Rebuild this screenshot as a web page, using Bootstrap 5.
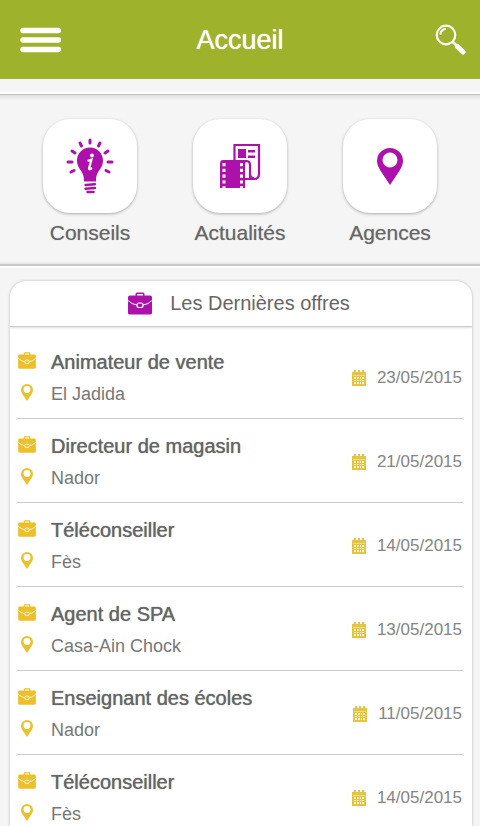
<!DOCTYPE html>
<html lang="fr">
<head>
<meta charset="utf-8">
<meta name="viewport" content="width=device-width, initial-scale=1">
<title>Accueil</title>
<link href="https://cdn.jsdelivr.net/npm/bootstrap@5.3.0/dist/css/bootstrap.min.css" rel="stylesheet">
<style>
  :root { --green: #9fb22c; --purple: #ad10ab; --yellow: #ecc02a; }
  body { font-family: "Liberation Sans", Arial, sans-serif; color: #666; background: #f5f5f5; }
  svg { display: block; flex: none; }
  .topbar { background: var(--green); min-height: 79px; padding: 0 14px 0 20px; }
  .topbar h1 { font-size: 27px; line-height: 32px; text-shadow: 0 0 1px #fff; }
  .side-start { width: 48px; }
  .side-end { width: 54px; }
  .shortcuts { margin-top: 15px; padding: 24px 15px 15px; border-top: 1px solid #bcbec2; border-bottom: 2px solid #c9c9c9;
    background: linear-gradient(#dfe0e3, #f5f5f5 5px, #f5f5f5 calc(100% - 3px), #e4e4e4);
    box-shadow: 0 -2px 0 #fff, 0 2px 0 #fff; }
  .shortcuts a { color: #666; font-size: 21px; line-height: 32px; text-shadow: 0 0 1px #aaa; }
  .tile { width: 94px; height: 94px; border-radius: 27px; background: #fff; box-shadow: 0 1px 3px #aaa; margin-bottom: 4px; color: var(--purple); }
  .offers { margin: 15px 8px 0 10px; border-radius: 16px 16px 0 0; box-shadow: 0 0 3px #b5b5b5; }
  .offers-head { border-bottom: 1px solid #ccc; box-shadow: 0 1px 2px #ddd; padding: 7px 0; color: #666; }
  .offers-head h2 { font-size: 20px; line-height: 31px; }
  .offers-head svg { color: var(--purple); margin-right: 18px; }
  .offer-list { padding: 8px 9px 0 7px; scrollbar-width: none; }
  .offer { padding: 11px 1px 8px; border-bottom: 1px solid #ccc; }
  .offer svg { color: var(--yellow); }
  .line { height: 32px; gap: 15px; }
  .line svg { margin-bottom: 4px; }
  .line h3 { font-size: 20px; line-height: 32px; text-shadow: 0 0 1px #666; }
  .place { font-size: 18px; line-height: 32px; color: #777; }
  .when { font-size: 17px; color: #858585; gap: 11px; }
  .offer .when svg { color: #e5c440; }
</style>
<script src="https://cdn.jsdelivr.net/npm/bootstrap@5.3.0/dist/js/bootstrap.bundle.min.js"></script>
</head>
<body class="vh-100 d-flex flex-column overflow-hidden">
<svg width="0" height="0" class="position-absolute" aria-hidden="true">
  <symbol id="case" viewBox="0 0 24 23">
    <path fill="currentColor" fill-rule="evenodd" d="M7.500 3.500V2Q7.500.5 9 .5h6q1.500 0 1.500 1.500v1.500h5.500q2 0 2 2V21q0 1.500-2 1.500H2Q0 22.500 0 21V5.500q0-2 2-2zM9 3.500h6V2H9z"/>
    <path d="M0 8.500q4 4 9 4.500M24 8.500q-4 4-9 4.500" fill="none" stroke="#fff" stroke-width="1"/>
    <rect x="9" y="11" width="6" height="4.500" rx="2" fill="none" stroke="#fff" stroke-width="1.200"/>
  </symbol>
  <symbol id="pin" viewBox="0 0 26 37">
    <path fill="currentColor" fill-rule="evenodd" d="M13 0a13 13 0 0 1 13 13c0 4-2 7-4 10.500L13 37 4 23.500C2 20 0 17 0 13A13 13 0 0 1 13 0zm0 4.500a7.500 7.500 0 1 0 0 15 7.500 7.500 0 0 0 0-15z"/>
  </symbol>
  <symbol id="calendar" viewBox="0 0 14 16">
    <path fill="currentColor" d="M0 2h14v14H0zM2 0h2v3H2zM10 0h2v3h-2zM6 0h2v3H6z"/>
    <path stroke="#fff" stroke-width="1" d="M1 5.500h12" opacity=".4"/>
    <path fill="#fff" opacity=".75" d="M2 7h2v2H2zM5 7h2v2H5zM8 7h1v2H8zM10 7h2v2h-2zM2 10h2v1H2zM5 10h2v1H5zM8 10h1v1H8zM10 10h2v1h-2zM2 12h2v2H2zM5 12h2v2H5zM8 12h1v2H8zM10 12h2v2h-2z"/>
  </symbol>
</svg>

<header class="topbar d-flex align-items-center justify-content-between flex-shrink-0 text-white">
  <button type="button" class="side-start btn p-0 border-0 text-white" aria-label="Menu">
    <svg width="41" height="26" viewBox="0 0 41 26"><path d="M3 3.500h35.500M3 13h35.500M3 22.500h35.500" stroke="#fff" stroke-width="5.400" stroke-linecap="round"/></svg>
  </button>
  <h1 class="m-0 fw-normal">Accueil</h1>
  <button type="button" class="side-end btn p-0 border-0 d-flex justify-content-end" aria-label="Rechercher">
    <svg width="31" height="31" viewBox="0 0 31 31" fill="none" stroke="#fff" stroke-linecap="round"><circle cx="11" cy="11" r="9.300" stroke-width="2.200"/><path d="M5.500 10q.5-4 4.500-5" stroke-width="2.200"/><path d="M18 18l4 4" stroke-width="2.800"/><path d="M22.500 22.500l5.500 5.500" stroke-width="5"/></svg>
  </button>
</header>

<nav class="shortcuts flex-shrink-0" aria-label="Raccourcis">
  <div class="row g-0 text-center">
    <div class="col"><a href="#conseils" class="d-inline-flex flex-column align-items-center text-decoration-none">
      <span class="tile d-flex align-items-center justify-content-center">
        <svg width="48" height="56" viewBox="0 0 48 56"><g fill="none" stroke="currentColor" stroke-width="3" stroke-linecap="round"><path d="M24 2v3M14 5l1.500 3M34 5l-1.500 3M6 13l3 2M42 13l-3 2M2 24h4M42 24h4M5 34l3-1.500M43 34l-3-1.500"/></g><path fill="currentColor" d="M24 9.500c7.500 0 13 6 13 13 0 5-2.500 8-4.500 11-1.800 3-2.500 5-2.500 10H18c0-5-.7-7-2.500-10-2-3-4.500-6-4.500-11 0-7 5.500-13 13-13z"/><path d="M19.500 47l9.500-.8M19.500 50.800l9.500-.8M21.500 54h6" stroke="currentColor" stroke-width="2.400" stroke-linecap="round"/><path d="M21.500 23l4-1.500-2.500 9q0 1.500 3-.5" fill="none" stroke="#fff" stroke-width="2.200"/><circle cx="26" cy="17.500" r="1.900" fill="#fff"/></svg>
      </span>Conseils</a></div>
    <div class="col"><a href="#actualites" class="d-inline-flex flex-column align-items-center text-decoration-none">
      <span class="tile d-flex align-items-center justify-content-center">
        <svg width="42" height="46" viewBox="0 0 42 46"><path d="M15.500 17V2h24.500v29q0 5-5 5h-9M31 36V22q0-4-4-4" fill="none" stroke="currentColor" stroke-width="2.200"/><path d="M31 29q0 6 4 6" fill="none" stroke="currentColor" stroke-width="1.600"/><path fill="currentColor" d="M19 6h8v9h-8zM29 7h7v2.500h-7zM29 12.500h7V15h-7zM4 17h24q-2 2-2 5v23H1V21q0-4 3-4z"/><path d="M5 20v25M22.500 20v25" stroke="#fff" stroke-width="3" stroke-dasharray="3.200 2.600"/></svg>
      </span>Actualités</a></div>
    <div class="col"><a href="#agences" class="d-inline-flex flex-column align-items-center text-decoration-none">
      <span class="tile d-flex align-items-center justify-content-center"><svg width="26" height="37"><use href="#pin"/></svg></span>Agences</a></div>
  </div>
</nav>

<main class="offers bg-white d-flex flex-column flex-grow-1 overflow-hidden">
  <div class="offers-head d-flex align-items-center justify-content-center flex-shrink-0">
    <svg width="24" height="23"><use href="#case"/></svg>
    <h2 class="m-0 me-1 fw-normal">Les Dernières offres</h2>
  </div>
  <ul class="offer-list list-unstyled m-0 flex-grow-1 overflow-auto">
    <li class="offer d-flex align-items-center justify-content-between">
      <div><div class="line d-flex align-items-center"><svg width="18" height="17"><use href="#case"/></svg><h3 class="m-0 fw-normal">Animateur de vente</h3></div>
      <div class="line d-flex align-items-center"><svg width="18" height="17"><use href="#pin"/></svg><span class="place">El Jadida</span></div></div>
      <div class="when d-flex align-items-center"><svg width="14" height="16"><use href="#calendar"/></svg><time datetime="2015-05-23">23/05/2015</time></div>
    </li>
    <li class="offer d-flex align-items-center justify-content-between">
      <div><div class="line d-flex align-items-center"><svg width="18" height="17"><use href="#case"/></svg><h3 class="m-0 fw-normal">Directeur de magasin</h3></div>
      <div class="line d-flex align-items-center"><svg width="18" height="17"><use href="#pin"/></svg><span class="place">Nador</span></div></div>
      <div class="when d-flex align-items-center"><svg width="14" height="16"><use href="#calendar"/></svg><time datetime="2015-05-21">21/05/2015</time></div>
    </li>
    <li class="offer d-flex align-items-center justify-content-between">
      <div><div class="line d-flex align-items-center"><svg width="18" height="17"><use href="#case"/></svg><h3 class="m-0 fw-normal">Téléconseiller</h3></div>
      <div class="line d-flex align-items-center"><svg width="18" height="17"><use href="#pin"/></svg><span class="place">Fès</span></div></div>
      <div class="when d-flex align-items-center"><svg width="14" height="16"><use href="#calendar"/></svg><time datetime="2015-05-14">14/05/2015</time></div>
    </li>
    <li class="offer d-flex align-items-center justify-content-between">
      <div><div class="line d-flex align-items-center"><svg width="18" height="17"><use href="#case"/></svg><h3 class="m-0 fw-normal">Agent de SPA</h3></div>
      <div class="line d-flex align-items-center"><svg width="18" height="17"><use href="#pin"/></svg><span class="place">Casa-Ain Chock</span></div></div>
      <div class="when d-flex align-items-center"><svg width="14" height="16"><use href="#calendar"/></svg><time datetime="2015-05-13">13/05/2015</time></div>
    </li>
    <li class="offer d-flex align-items-center justify-content-between">
      <div><div class="line d-flex align-items-center"><svg width="18" height="17"><use href="#case"/></svg><h3 class="m-0 fw-normal">Enseignant des écoles</h3></div>
      <div class="line d-flex align-items-center"><svg width="18" height="17"><use href="#pin"/></svg><span class="place">Nador</span></div></div>
      <div class="when d-flex align-items-center"><svg width="14" height="16"><use href="#calendar"/></svg><time datetime="2015-05-11">11/05/2015</time></div>
    </li>
    <li class="offer d-flex align-items-center justify-content-between">
      <div><div class="line d-flex align-items-center"><svg width="18" height="17"><use href="#case"/></svg><h3 class="m-0 fw-normal">Téléconseiller</h3></div>
      <div class="line d-flex align-items-center"><svg width="18" height="17"><use href="#pin"/></svg><span class="place">Fès</span></div></div>
      <div class="when d-flex align-items-center"><svg width="14" height="16"><use href="#calendar"/></svg><time datetime="2015-05-14">14/05/2015</time></div>
    </li>
  </ul>
</main>
</body>
</html>
